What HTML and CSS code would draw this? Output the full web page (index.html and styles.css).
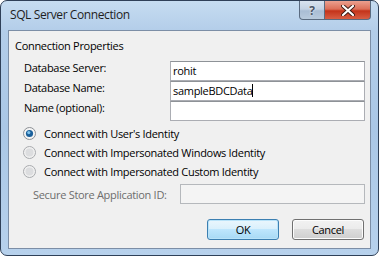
FILE: index.html
```html
<!DOCTYPE html>
<html lang="en">
<head>
    <meta charset="UTF-8">
    <title>SQL Server Connection</title>
    <link rel="stylesheet" href="styles.css">
</head>
<body>
    <div class="window">
        <div class="titlebar">
            <span class="title">SQL Server Connection</span>
            <div class="caption-buttons">
                <div class="cap-btn help">?</div>
                <div class="cap-btn close">
                    <svg width="14" height="11" viewBox="0 0 14 11">
                        <path d="M2 1 L12 10 M12 1 L2 10" stroke="#3b1a14" stroke-width="4" stroke-linecap="round"/>
                        <path d="M2 1 L12 10 M12 1 L2 10" stroke="#ffffff" stroke-width="2.2" stroke-linecap="round"/>
                    </svg>
                </div>
            </div>
        </div>

        <div class="client">
            <div class="group-title">Connection Properties</div>

            <div class="fields">
                <label>Database Server:</label>
                <div class="textbox">rohit</div>
                <label>Database Name:</label>
                <div class="textbox">sampleBDCData<span class="caret"></span></div>
                <label>Name (optional):</label>
                <div class="textbox"></div>
            </div>

            <div class="radios">
                <div class="radio-row">
                    <svg class="radio" width="13" height="13" viewBox="0 0 13 13">
                        <circle cx="6.5" cy="6.5" r="6" fill="#f4f4f4" stroke="#8c8f94"/>
                        <circle cx="6.5" cy="6.5" r="3.6" fill="#1a5f9a"/>
                        <circle cx="5.8" cy="5.6" r="1.6" fill="#7fc3ec"/>
                    </svg>
                    <span>Connect with User's Identity</span>
                </div>
                <div class="radio-row">
                    <svg class="radio" width="13" height="13" viewBox="0 0 13 13">
                        <circle cx="6.5" cy="6.5" r="6" fill="#f0f0f0" stroke="#a9abae"/>
                        <circle cx="6.5" cy="6.5" r="4" fill="#dcdddf"/>
                    </svg>
                    <span>Connect with Impersonated Windows Identity</span>
                </div>
                <div class="radio-row">
                    <svg class="radio" width="13" height="13" viewBox="0 0 13 13">
                        <circle cx="6.5" cy="6.5" r="6" fill="#f0f0f0" stroke="#a9abae"/>
                        <circle cx="6.5" cy="6.5" r="4" fill="#dcdddf"/>
                    </svg>
                    <span>Connect with Impersonated Custom Identity</span>
                </div>
            </div>

            <div class="secure-row">
                <label>Secure Store Application ID:</label>
                <div class="textbox disabled"></div>
            </div>

            <div class="buttons">
                <button class="btn default">OK</button>
                <button class="btn">Cancel</button>
            </div>
        </div>
    </div>
</body>
</html>
```

FILE: styles.css
```css
body {
    margin: 0;
    width: 379px;
    height: 256px;
    overflow: hidden;
    font-family: "Open Sans", "Liberation Sans", sans-serif;
    font-size: 11px;
    letter-spacing: -0.3px;
    color: #000;
}
.window {
    box-sizing: border-box;
    width: 379px;
    height: 256px;
    border: 1px solid #2f4058;
    border-radius: 7px;
    background: linear-gradient(180deg, #c6dcf1 0%, #b3cde9 12%, #aac7e6 50%, #b7d1ec 100%);
    display: flex;
    flex-direction: column;
}
.titlebar {
    height: 28px;
    display: flex;
    justify-content: space-between;
    align-items: flex-start;
}
.title {
    margin: 5px 0 0 9px;
    font-size: 12px;
    letter-spacing: -0.4px;
    color: #1e1e1e;
}
.caption-buttons {
    display: flex;
    margin-right: 7px;
}
.cap-btn {
    box-sizing: border-box;
    height: 19px;
    border: 1px solid #5a6b80;
    border-top: none;
    display: flex;
    align-items: center;
    justify-content: center;
}
.help {
    width: 26px;
    border-radius: 0 0 0 4px;
    background: linear-gradient(180deg, #d8e3ef 0%, #c3d2e3 45%, #a9bdd4 55%, #b8cadd 100%);
    color: #4a5566;
    font-weight: bold;
    font-size: 12px;
    text-shadow: 0 0 2px #fff;
}
.close {
    width: 46px;
    border-left: none;
    border-radius: 0 0 4px 0;
    background: linear-gradient(180deg, #eba08f 0%, #dc6f58 45%, #c4331a 55%, #d85e44 100%);
}
.client {
    box-sizing: border-box;
    margin: 1px 7px 6px 7px;
    flex: 1;
    background: #f0f0f0;
    border: 1px solid #7c8ea6;
    padding: 7px 6px 0 6px;
}
.group-title {
    height: 15px;
    line-height: 15px;
}
.fields {
    display: grid;
    grid-template-columns: 146px 195px;
    grid-auto-rows: 20px;
    margin: 8px 0 0 9px;
}
.fields label {
    line-height: 14px;
}
.textbox {
    box-sizing: border-box;
    background: #fff;
    border: 1px solid #abadb3;
    border-top-color: #8e9297;
    padding: 0 2px;
    line-height: 18px;
    height: 20px;
    white-space: nowrap;
}
.caret {
    display: inline-block;
    width: 1px;
    height: 13px;
    background: #000;
    vertical-align: -2px;
}
.radios {
    margin: 3px 0 0 8px;
    display: flex;
    flex-direction: column;
}
.radio-row {
    height: 19px;
    display: flex;
    align-items: center;
    gap: 8px;
}
.secure-row {
    margin: 2px 0 0 18px;
    display: grid;
    grid-template-columns: 147px 185px;
    align-items: center;
    height: 22px;
}
.secure-row label {
    color: #6d6d6d;
}
.textbox.disabled {
    background: #f4f4f4;
    border-color: #b5b8bc;
}
.buttons {
    margin-top: 14px;
    display: flex;
    justify-content: flex-end;
    gap: 13px;
}
.btn {
    width: 72px;
    height: 21px;
    font-family: inherit;
    font-size: 11px;
    letter-spacing: inherit;
    color: #000;
    border: 1px solid #707070;
    border-radius: 3px;
    background: linear-gradient(180deg, #f2f2f2 0%, #ebebeb 49%, #dddddd 50%, #cfcfcf 100%);
    box-shadow: inset 0 0 0 1px #fcfcfc;
    padding: 0;
}
.btn.default {
    border-color: #3c7fb1;
    background: linear-gradient(180deg, #eaf6fd 0%, #d9f0fc 49%, #bee6fd 50%, #a7d9f5 100%);
    box-shadow: inset 0 0 0 1px #b9e3f9;
}
```
